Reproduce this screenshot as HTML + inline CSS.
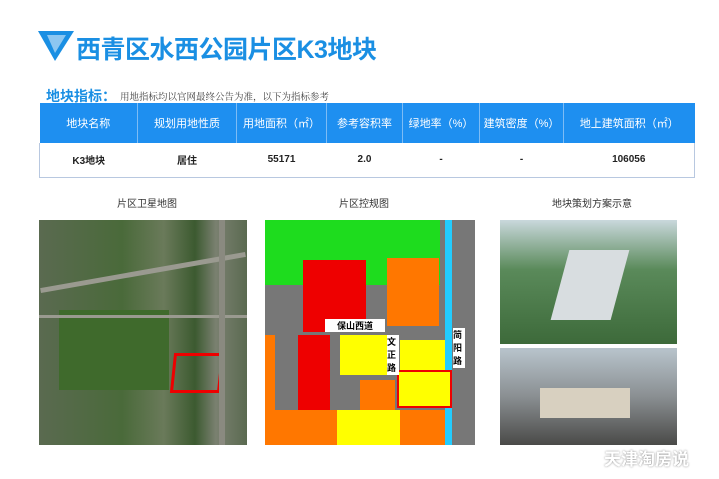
<!DOCTYPE html>
<html><head><meta charset="utf-8"><style>
*{margin:0;padding:0;box-sizing:border-box}
body{width:719px;height:479px;background:#fff;position:relative;overflow:hidden;font-family:"Liberation Sans","Noto Sans CJK SC",sans-serif}
.abs{position:absolute}
.title{left:76px;top:30px;font-size:25px;font-weight:bold;color:#1a8fe3;letter-spacing:-0.5px}
.sub{left:46px;top:86px;font-size:14px;font-weight:bold;color:#1a8fe3}
.subn{left:120px;top:89px;font-size:9.5px;color:#444;font-family:"Noto Serif CJK SC",serif}
table{position:absolute;left:39px;top:103px;width:656px;border-collapse:collapse;font-size:11px}
th{background:#1e8ff0;color:#fff;font-weight:normal;height:40px;border-right:1px solid #7dbcf5}
td{height:34px;text-align:center;font-weight:bold;font-size:10px;color:#222;border-bottom:1px solid #b8c8e0}
tr td:first-child{border-left:1px solid #b8c8e0}tr td:last-child{border-right:1px solid #b8c8e0}
.cap{top:195px;font-size:10px;color:#333}
</style></head><body>
<svg class="abs" style="left:38px;top:31px" width="36" height="30"><polygon points="0,0 36,0 17,30" fill="#1a8fe3"/><polygon points="9,4 28,4 17,22" fill="#fff" opacity=".5"/></svg>
<div class="abs title">西青区水西公园片区K3地块</div>
<div class="abs sub">地块指标：</div>
<div class="abs subn">用地指标均以官网最终公告为准，以下为指标参考</div>
<table>
<tr><th style="width:98px">地块名称</th><th style="width:99px">规划用地性质</th><th style="width:90px">用地面积（㎡）</th><th style="width:76px">参考容积率</th><th style="width:77px">绿地率（%）</th><th style="width:84px">建筑密度（%）</th><th style="border-right:none">地上建筑面积（㎡）</th></tr>
<tr><td>K3地块</td><td>居住</td><td>55171</td><td>2.0</td><td>-</td><td>-</td><td>106056</td></tr>
</table>
<div class="abs cap" style="left:117px">片区卫星地图</div>
<div class="abs cap" style="left:339px">片区控规图</div>
<div class="abs cap" style="left:552px">地块策划方案示意</div>
<div class="abs" style="left:39px;top:220px;width:208px;height:225px;background:linear-gradient(90deg,#5a6a50 0%,#4a6a3a 40%,#6a7a5a 60%,#3c5a30 75%,#7a8070 85%,#5a6a50 100%)">
<div class="abs" style="left:20px;top:90px;width:110px;height:80px;background:#3f6a2c"></div>
<div class="abs" style="left:133px;top:133px;width:50px;height:40px;border:3px solid #e00;transform:skewX(-6deg)"></div>
<div class="abs" style="left:0;top:50px;width:208px;height:5px;background:#9a9a90;transform:rotate(-10deg)"></div>
<div class="abs" style="left:0;top:95px;width:208px;height:3px;background:#9a9a90"></div>
<div class="abs" style="left:180px;top:0;width:6px;height:225px;background:#8a8a80"></div>
</div>
<div class="abs" style="left:265px;top:220px;width:210px;height:225px;background:#777">
<div class="abs" style="left:0;top:0;width:175px;height:65px;background:#1edc1e"></div>
<div class="abs" style="left:180px;top:0;width:7px;height:225px;background:#2cf"></div>
<div class="abs" style="left:38px;top:40px;width:63px;height:72px;background:#e00"></div>
<div class="abs" style="left:122px;top:38px;width:52px;height:68px;background:#f70"></div>
<div class="abs" style="left:0;top:115px;width:10px;height:95px;background:#f70"></div>
<div class="abs" style="left:33px;top:115px;width:32px;height:95px;background:#e00"></div>
<div class="abs" style="left:75px;top:115px;width:55px;height:40px;background:#ff0"></div>
<div class="abs" style="left:135px;top:120px;width:45px;height:40px;background:#ff0"></div>
<div class="abs" style="left:132px;top:150px;width:55px;height:38px;background:#ff0;border:2px solid #e00"></div>
<div class="abs" style="left:95px;top:160px;width:35px;height:35px;background:#f70"></div>
<div class="abs" style="left:0;top:190px;width:180px;height:35px;background:linear-gradient(90deg,#f70,#f70 40%,#ff0 40%,#ff0 75%,#f70 75%)"></div>
<div class="abs" style="left:60px;top:99px;width:60px;height:13px;background:#fff;font-size:9px;font-weight:bold;text-align:center">保山西道</div>
<div class="abs" style="left:122px;top:115px;width:12px;height:40px;background:#fff;font-size:9px;font-weight:bold">文正路</div>
<div class="abs" style="left:188px;top:108px;width:12px;height:40px;background:#fff;font-size:9px;font-weight:bold">简阳路</div>
</div>
<div class="abs" style="left:500px;top:220px;width:177px;height:124px;background:linear-gradient(180deg,#c9d8dc 0%,#5a8a5a 40%,#3d6a3a 100%)">
<div class="abs" style="left:60px;top:30px;width:60px;height:70px;background:#d8dde0;transform:skewX(-15deg)"></div>
</div>
<div class="abs" style="left:500px;top:348px;width:177px;height:97px;background:linear-gradient(180deg,#b8c4cc 0%,#8a8f92 50%,#4a4a48 100%)">
<div class="abs" style="left:40px;top:40px;width:90px;height:30px;background:#d8d0c0"></div>
</div>
<div class="abs" style="left:604px;top:445px;font-size:17px;font-weight:bold;color:#fff;text-shadow:0 0 2px #888">天津淘房说</div>
</body></html>
